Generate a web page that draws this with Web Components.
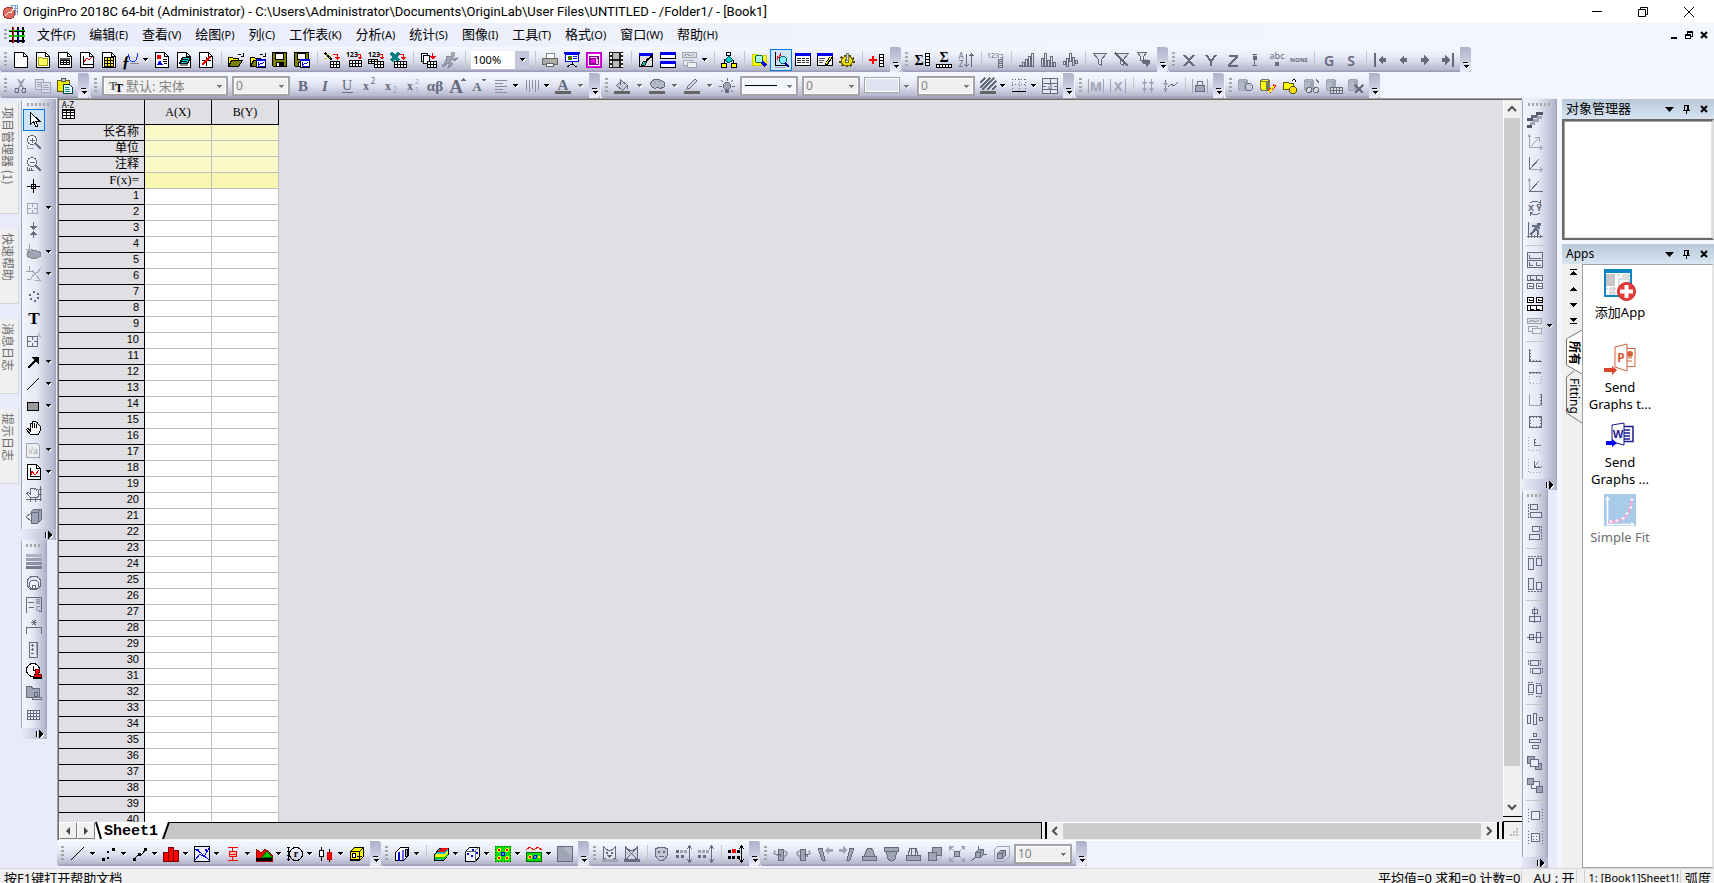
<!DOCTYPE html>
<html lang="zh-CN">
<head>
<meta charset="utf-8">
<title>OriginPro 2018C</title>
<style>
html, body { height: 100%; margin: 0; }
body { overflow: hidden; background: #fff; color: #000; font: 12px/16px "Noto Sans", "Noto Sans CJK SC", sans-serif; }
</style>
</head>
<body>
<origin-app></origin-app>
<script>
/* ---------- icon drawing helpers (16 x 16 grid) ---------- */
const D = '#636b7c', G = '#9fa5b4', K = '#000', RED = '#f00', BLU = '#0000f0', YEL = '#ffff00';
const L = (d, c = D, w = 1) => `<path d="${d}" fill="none" stroke="${c}" stroke-width="${w}"/>`;
const F = (d, c = D, s) => `<path d="${d}" fill="${c}"${s ? ` stroke="${s}"` : ''}/>`;
const R = (x, y, w, h, f = 'none', s) => s
  ? `<rect x="${x + .5}" y="${y + .5}" width="${w - 1}" height="${h - 1}" fill="${f}" stroke="${s}"/>`
  : `<rect x="${x}" y="${y}" width="${w}" height="${h}" fill="${f}"/>`;
const C = (x, y, r, f = 'none', s = D) => `<circle cx="${x}" cy="${y}" r="${r}" fill="${f}" stroke="${s}"/>`;
const T = (x, y, size, t, c = D, extra = '') => `<text x="${x}" y="${y}" font-size="${size}" fill="${c}" text-anchor="middle" ${extra}>${t}</text>`;
const SERIF = 'font-family="Liberation Serif" font-weight="bold"';
const DASH = (d, c = D) => `<path d="${d}" fill="none" stroke="${c}" stroke-dasharray="2 1"/>`;
const DOT = (d, c = D) => `<path d="${d}" fill="none" stroke="${c}" stroke-dasharray="1 2"/>`;
const GRID = (x, y, nx, ny, cw, ch, f = '#fff', s = K) => {
  let p = R(x, y, nx * cw + 1, ny * ch + 1, f);
  for (let i = 0; i <= nx; i++) p += R(x + i * cw, y, 1, ny * ch + 1, s);
  for (let j = 0; j <= ny; j++) p += R(x, y + j * ch, nx * cw + 1, 1, s);
  return p;
};
const PG = F('M1.5 .5h9l4 4v11h-13z', '#fff', K) + L('M10.5 .5v4h4', K);
const REDARR = L('M9 2.5h4.5v3', RED) + F('M11 5h5.5L13.700 8z', RED);
const GRAPH = R(6, 7, 10, 9, '#fff', K) + R(6, 7, 10, 2, BLU) + L('M8.5 10v4.500h6M9 13l2-2 1 1 2-2', BLU);
const FOLD = F('M.5 14.500v-9h4l1 1h5v2', YEL, K) + F('M.5 14.500l3-6h11l-4 6z', '#808000', K) + L('M9.500 3.500q2-3 4 0M15.500 1v3h-3', K);
const FLOP = F('M.5 .5h14v14h-13l-1-1z', '#808000', K) + R(3, 1, 9, 7, '#fff', K) + R(4, 10, 8, 5, K) + R(5, 11, 2, 3, '#fff');
const CYL = (f, s, x = 0) => F(`M${x + .5} 2.500v9q4.500 3 9 0v-9q-4.500-3-9 0z`, f, s) + L(`M${x + .5} 2.500q4.500 3 9 0`, s) + R(x + 6, 4, 3, 8, s);
const BAR = hs => hs.map((h, i) => R(1 + i * 3, 15 - h, 3, h, 'none', D)).join('');
const MINI = (x, y, c) => R(x, y, 7, 6, '#fff', c) + L(`M${x + 2.500} ${y + 1.500}v2h3`, c);

const ICONS = {
  app: L('M8 1.500h7.500v9M10 1.500v2M13 1.500v9M10 4.500h6M12 7.500h4', '#7fa5d6') + C(7, 9, 6, '#e06a5c', '#a63a30') + L('M3 12l4-4 2 1 3-5', '#fff'),
  matrixwin: L('M0 3.500h16M0 8.500h16M0 13.500h16', K, 2) + L('M3.500 0v16M8.500 0v16M13.500 0v16', K, 2) + L('M0 8.500h16', '#0c0', 2) + L('M0 3.500h16', '#0c0') + L('M4.500 0v16', RED) + L('M9.500 0v16', '#00a'),
  azgrid: T(7, 5, 8, 'A-Z', K) + GRID(1, 6, 3, 3, 4, 3, '#fff') + R(1, 6, 13, 2, K),
  'new': PG,
  newfolder: PG + F('M3.500 13.500v-8h3l1 1h5v7z', '#ffff66', '#a0a000'),
  newbook: PG + GRID(3, 6, 3, 3, 3, 2, '#fff') + R(3, 6, 10, 2, '#555'),
  newgraph: PG + L('M4.500 4v8.500h9', K) + L('M5 10l3-4 2 2 3-3', RED),
  newmatrix: PG + GRID(3, 5, 3, 3, 3, 3, '#ffee20'),
  newfunc: T(3, 15, 16, 'ƒ', K, SERIF + ' font-style="italic"') + L('M5.500 2q1 8 4.500 8t5-9', '#1030ff') + L('M7 11.500h9', '#888'),
  newlayout: PG + R(3, 3, 4, 4, RED) + F('M3 13l3-5 3 5z', BLU) + L('M9 7.500h4M9 9.500h4M10 11.500h3', K),
  newnotes: PG + F('M3.500 11.500l3-6h8l-3 6z', '#00e0e0', K) + L('M6 7.500h6M5 9.500h6', K) + R(4, 12, 8, 2, '#888'),
  newfunc2: PG + L('M4 8.500h9M8.500 5v9', K) + L('M4 13l8-8', RED, 2),
  open: FOLD,
  opent: FOLD + GRAPH, save: FLOP, savet: FLOP + GRAPH,
  wand: L('M1 1l7 7', K, 2) + L('M2 4l3-3M5 6l3-3M0 6h3', '#cc0') + REDARR + GRID(6, 9, 3, 2, 3, 3),
  imp1: T(6, 5, 7, '123', K, 'font-weight="bold"') + L('M11 2.500h3v3', RED) + F('M11 5h5l-2 3z', RED) + GRID(3, 8, 4, 2, 3, 3),
  imp2: T(6, 5, 7, '123', K, 'font-weight="bold"') + L('M11 2.500h3v3', RED) + F('M11 5h5l-2 3z', RED) + GRID(0, 7, 3, 2, 3, 2) + GRID(6, 9, 3, 2, 3, 3),
  excel: L('M1 1l8 8M9 1L1 9', '#008080', 3) + REDARR + GRID(4, 9, 4, 2, 3, 3),
  batch: R(1, 1, 7, 9, '#fff', K) + R(3, 3, 7, 9, '#fff', K) + L('M12.500 1v4', RED) + F('M10 4h6l-3 4z', RED) + GRID(7, 9, 3, 2, 3, 3),
  run: C(11, 2.500, 2, G, G) + F('M4 5l5-1 3 3 3-1v1l-3 2-2-2-2 2 3 3-3 3-2 0 2-3-3-1-2 3H0v-2h2l3-5-1-1z', G, '#858c9c'),
  print: R(4, 1, 9, 6, '#fff', '#888') + F('M.5 6.500h15v6h-15z', '#aaa', '#666') + R(4, 11, 8, 4, '#fff', '#666') + R(11, 8, 2, 1, '#cc0'),
  slide: R(0, 0, 16, 2, BLU) + R(1, 2, 14, 8, '#fff', BLU) + C(6, 6, 2, RED, '#090') + L('M9 4.500h4M9 6.500h4', BLU) + L('M8 10v3M3 15l5-3 5 3', K),
  snap: R(0, 0, 16, 16, '#f0f', '#b000b0') + R(2, 2, 12, 12, '#fff') + R(3, 4, 10, 9, '#fcf', '#808') + C(7, 9, 3, '#f0f', '#808') + R(11, 5, 2, 2, '#808'),
  film: R(1, 0, 14, 16, '#222') + R(5, 1, 6, 6, '#bbb') + R(5, 9, 6, 6, '#bbb') + DOTS(2.5, '#fff') + DOTS(13.5, '#fff'),
  editpen: R(1, 1, 14, 14, '#ddd', K) + R(1, 1, 14, 3, BLU) + L('M15 3L8 9', K, 2) + F('M3 14l2-4 4-1-2 4z', '#0cc', K),
  twowin: R(0, 0, 16, 7, '#fff', K) + R(0, 0, 16, 3, BLU) + R(0, 9, 16, 7, '#fff', K) + R(0, 9, 16, 3, BLU),
  tile: R(0, 0, 15, 6, '#ddd', G) + L('M2 4l3-2 3 2 4-2', G) + R(1, 8, 10, 6, '#eee', G) + R(5, 10, 10, 6, '#eee', G),
  org: R(5, 0, 5, 4, '#fff', K) + L('M7.500 4v3M3 11V8l4-2 5 2v3', K) + F('M8 4l4 4-4 3-4-3z', '#0cc', '#066') + R(0, 11, 6, 5, YEL, K) + R(10, 11, 6, 5, YEL, K),
  project: F('M1 2h5l1 1h8v10H1z', YEL, '#cc0') + C(8, 7, 4, '#aff', '#066') + L('M11 10l4 4', BLU, 3),
  view: L('M2.500 0v13.500h12', K) + L('M4 8V4l2 2 2-5', RED) + L('M2 15.500h10', G) + C(10, 8, 3.500, '#8ef', '#066') + L('M12 11l4 4', '#008', 2),
  results: R(0, 1, 16, 13, '#fff', K) + R(0, 1, 16, 3, BLU) + L('M2 6.500h4M7 6.500h3M11 6.500h3M2 8.500h4M7 8.500h3M11 8.500h3M2 10.500h4M7 10.500h3M11 10.500h3', '#333'),
  script: R(0, 1, 16, 13, '#fff', K) + R(0, 1, 16, 3, BLU) + L('M2 6.500h6M2 8.500h5M2 10.500h4', '#555') + L('M14 5l-5 8', K, 3) + L('M14 5l-5 7', YEL),
  gear: `<ellipse cx="8" cy="9" rx="6.500" ry="5" fill="none" stroke="#554400" stroke-width="3" stroke-dasharray="2 2"/>` + `<ellipse cx="8" cy="9" rx="6" ry="4.500" fill="#e6e000" stroke="#776600"/>` + C(8, 9, 2, '#fff', '#660') + R(7, 1, 3, 8, '#ddd', '#777'),
  addcol: L('M0 7.500h8M4 3.500v8', RED, 2) + GRID(10, 2, 1, 4, 4, 3),
  sumrow: T(5, 13, 14, 'Σ', K, SERIF) + GRID(11, 1, 1, 4, 4, 3),
  sumcol: T(8, 10, 14, 'Σ', K, SERIF) + GRID(0, 12, 5, 1, 3, 3),
  sort: T(3, 7, 8, 'A') + T(3, 15, 8, 'Z') + L('M8.500 2v12M6 12l2.500 2 2.500-2M13.500 3v12M11.500 4l2-2 2 2'),
  set123: T(5, 6, 7, '123') + L('M11 2.500h3v3', G) + F('M11 5h5l-2 2z', G) + GRID(10, 7, 1, 4, 4, 2, '#ddd', D),
  bars1: BAR([2, 5, 8, 11, 14]), bars2: BAR([9, 14, 7, 11, 5]),
  bars3: R(1, 9, 3, 4, 'none', D) + R(4, 6, 3, 9, 'none', D) + R(7, 1, 3, 9, 'none', D) + R(10, 5, 3, 9, 'none', D) + R(13, 8, 3, 4, 'none', D),
  filter: F('M1.500 1.500h13l-5 6v6l-3-2v-4z', '#dfe2ec', D),
  nofilter: F('M1.500 1.500h13l-5 6v6l-3-2v-4z', '#dfe2ec', D) + L('M1 1l13 13', D, 2),
  refilter: F('M1.500 .5h9l-3 4v4h-3v-4z', '#dfe2ec', D) + F('M6 9l4-2v1h4v3l-4 5v-4H7z', D),
  X: L('M3 3l10 11M13 3L3 14', D, 2), Y: L('M3 3l5 6 5-6M8 8v6', D, 2), Z: L('M4 4h8v1L4 13v.5h9', D, 2),
  err: L('M7.500 2v12M5 2.500h5M5 13.500h5') + R(6, 4, 4, 4, D),
  abc: T(8, 7, 9, 'abc') + R(6, 10, 4, 4, D),
  none: T(8, 10, 6, 'NONE', D, 'font-weight="bold"'),
  G: T(8, 14, 14, 'G', D, 'font-weight="600"'), S: T(8, 14, 14, 'S', D, 'font-weight="600"'),
  first: R(1, 1, 2, 14, D) + F('M5 8l5-5v3h3v4h-3v3z'), prev: F('M4 8l5-5v3h3v4h-3v3z'),
  next: F('M12 8L7 3v3H4v4h3v3z'), last: R(13, 1, 2, 14, D) + F('M11 8L6 3v3H3v4h3v3z'),

  cut: L('M5 1l5 9M11 1L6 10', G, 2) + C(4, 12.500, 2, 'none', D) + C(11, 12.500, 2, 'none', D),
  copy: R(0, 1, 9, 11, '#dde', G) + L('M2 4.500h4M2 6.500h4M2 8.500h4', G) + R(6, 4, 10, 11, '#dde', G) + L('M8 7.500h5M8 9.500h6M8 11.500h6', G),
  paste: R(0, 2, 13, 12, '#e8e800', '#665500') + R(4, 0, 5, 4, '#ccc', '#555') + F('M6.500 6.500h6l3 3v6h-9z', '#eff', '#044') + L('M8 9.500h4M8 11.500h5M8 13.500h5', '#088'),
  B: T(8, 13, 15, 'B', D, SERIF), I: T(8, 13, 15, 'I', D, SERIF + ' font-style="italic"'), U: T(8, 12, 14, 'U', D, 'font-family="Liberation Serif"') + R(3, 14, 11, 1, D),
  sup: T(5, 12, 12, 'x', D, SERIF) + T(12, 6, 8, '2', D), sub: T(5, 12, 12, 'x', D, SERIF) + T(12, 15, 8, '2', G),
  supsub: T(5, 12, 12, 'x', D, SERIF) + T(12, 6, 7, '2', G) + T(12, 14, 7, '1', G),
  greek: T(8, 13, 15, 'αβ', D, 'font-family="Liberation Serif" font-weight="bold"'),
  bigA: T(7, 15, 19, 'A', D, 'font-family="Liberation Serif" font-weight="bold"') + F('M11 3h6l-3-3z'), smallA: T(6, 13, 13, 'A', D, SERIF) + F('M10 1h5l-2 3z'),
  align: L('M2 2.500h12M2 5.500h8M2 8.500h12M2 11.500h8M2 14.500h12', '#888e9e'), vlines: L('M2.500 2v10M5.500 2v12M8.500 2v9M11.500 2v12M14.500 2v10', '#888e9e'),
  fontcolor: T(8, 12, 15, 'A', D, SERIF) + R(0, 13, 16, 3, '#646464'),
  bucket: F('M2.500 7.500l5-5 6 5-5 5z', '#c4c8d4', D) + L('M6 1v6M13 7v4', D) + R(0, 13, 16, 3, '#646464'),
  palette: F('M2.500 3.500q4-4 10-1t2 7l-4 1q-2-2-4 0l-3-1q-3-3-1-6z', '#b4b9c6', D) + C(6, 5, 1, '#fff', G) + C(10, 4, 1, '#fff', G) + R(0, 13, 16, 3, '#646464'),
  pen: F('M3 11l1-3 7-7 2 2-7 7z', '#d4d7e2', D) + R(0, 13, 16, 3, '#646464'),
  bulb: C(8, 8, 3.500, G, D) + R(6, 11, 4, 4, D) + L('M8 0v3M2 2l2 2M14 2l-2 2M0 8h3M13 8h3M2 14l2-2M14 14l-2-2'),
  tt: T(5, 12, 12, 'T', '#666', SERIF) + T(11, 14, 12, 'T', K, SERIF),
  hatch: L('M0 5l5-5M0 10L10 0M2 12L14 0M7 12l9-9M12 12l4-4', D, 1.5) + R(0, 13, 16, 3, '#646464'),
  border: DOT('M1 1.500h14M1 6.500h14M1.500 1v12M8 1v12M14.500 1v12') + R(1, 13, 14, 1, K),
  merge: R(0, 0, 16, 16, '#e4e6f0', D) + L('M0 5.500h16M0 11.500h16M8 0v5M8 12v4') + T(8, 11, 8, 'a') + L('M1 8.500h3M12 8.500h3'),
  maskM: T(8, 13, 13, 'M', G, 'font-weight="bold"') + L('M.5 1v14M15.500 1v14', G), maskX: T(8, 13, 13, 'X', G, 'font-weight="bold"') + L('M.5 1v14M15.500 1v14', G),
  arr1: L('M4.500 1v14M11.500 1v14', G) + F('M2 4h5L4.500 7zM2 12h5l-2.500-3zM9 4h5l-2.500 3zM9 12h5l-2.500-3z', G), arr2: L('M3.500 2v12M6 9l3-3 3 2 4-4', D) + F('M1 5h5L3.500 8zM1 12h5l-2.500-3z', G),
  lock: L('M.5 1v14M15.500 1v14', G) + L('M5.500 7V4q2.500-2 5 0v3') + R(3, 7, 10, 7, G, D),
  db1: CYL('#b4b9c6', G) + C(11, 9, 3.500, '#c8ccd8', D), db2: CYL(YEL, '#776') + L('M15 7l-6 7', RED, 3) + L('M14 8l-5 6', YEL, 2),
  db3: F('M1 4h5l1 1h4v6H1z', YEL, '#550') + L('M10 3q3-3 4 1', K) + C(11, 12, 3.500, '#fd0', '#550'), db4: CYL('#b4b9c6', G) + C(5, 12, 2.500, '#ddd') + C(12, 12, 2.500, '#ddd') + L('M12 1l3 4'),
  db5: CYL('#b4b9c6', G) + GRID(4, 9, 4, 2, 3, 3, '#ddd', D), db6: CYL('#b4b9c6', G) + L('M7 7l8 8M15 7l-8 8', D, 2),

  pointer: F('M4.500 .5v12l3-3 2.500 5.500 2-1-2.500-5h4z', '#fff', K),
  zoomin: C(6, 6, 4.500, '#f4f6fc', D) + L('M4 6.500h5M6.500 4v5') + L('M9 9l6 6', D, 2) + L('M1.500 11v3.500h6', G),
  zoomout: C(6, 6, 4.500, '#f4f6fc', D) + L('M4 6.500h5') + L('M9 9l6 6', D, 2) + L('M1.500 11v3.500h6M3.500 12v3M5.500 12v3', D),
  cross: L('M7.500 1v14M1 8.500h13', K) + R(5, 6, 5, 5, 'none', K),
  datasel: R(1, 3, 11, 11, 'none', G) + L('M1 8.500h4M8 8.500h4M6.500 3v4M6.500 10v4', G),
  updown: F('M4 4h7L7.500 8zM4 13h7L7.500 9zM7 0h1v4H7zM7 13h1v3H7z'),
  ellipse: `<ellipse cx="8" cy="10.500" rx="7" ry="4" fill="${G}" stroke="#888"/>` + L('M3.500 0v5M0 5.500h7M5 8l-2-2-2 2', G),
  ptpath: L('M1 14l4-1 3-5 4-2 3-4M6 4l8 10M3.500 0v5M0 5.500h7M9 14h6', G),
  dots: R(3, 6, 2, 2, D) + R(7, 3, 2, 2, D) + R(11, 5, 2, 2, D) + R(11, 9, 2, 2, D) + R(4, 10, 2, 2, D) + R(8, 12, 2, 2, D),
  text: T(8, 14, 17, 'T', K, SERIF), datatext: R(1, 4, 11, 11, 'none', D) + L('M1 9.500h4M8 9.500h4M6.500 4v4M6.500 11v4') + T(13, 6, 7, 'A', G),
  arrow: L('M2 14L11 5', K, 2) + F('M5 3h8v8z', K), line: L('M1 14L13 2', K), rect: R(1, 4, 12, 9, '#999', K),
  hand: F('M4.500 14.500l-4-5 1.500-1 2 2V3.500q1-1 2 0V2q1-2 2 0q1-1 2 0v1q2-1 2 1v1q1-1 2 1v5l-1.500 3.500z', '#fff', K) + L('M6.500 3v5M8.500 3v5M10.500 4v4', K),
  eq: F('M.5 1.500h11l2 2v12h-13z', '#eee', G) + T(7, 12, 9, '√a', G), gobj: PG + L('M4.500 4v8.500h9', K) + L('M5 11l1-4 2 3h2l3-4', RED),
  handaxis: F('M4.500 11.500l-4-4 2-1 2 2V3q2-1 2 0q1-2 2 0q2-1 2 1q1-1 2 1v5l-2 2z', '#eef', D) + L('M14.500 0v15M0 13.500h16M4.500 12v4M9.500 12v4M13 3.500h3M13 8.500h3'),
  box3d: F('M5 4l3-3h7v11l-3 3H5z', G, D) + L('M5 4h7v11M12 4l3-3M5 5L0 9l5 4'),

  lines4: R(0, 1, 16, 3, '#aeb3c4') + R(0, 5, 16, 3, '#9da2b5') + R(0, 9, 16, 3, '#8a90a2') + R(0, 13, 16, 3, '#747b8e'),
  rings: C(8, 8, 7, '#dfe3f2', D) + C(8, 9.500, 4.500, '#eef', D) + C(8, 12, 2, '#fff', D),
  legend: L('M.5 16V.5h15v14h-3M2 5.500h6M3 10.500h5') + T(12, 7, 7, 'B') + T(12, 14, 7, 'C'), bracket: L('M.5 15V8.500h15V15M5 3.500h6M8 1v5M6 1l4 5M10 1L6 6'),
  ruler: R(3, 1, 9, 16, '#e4e6f2', D) + L('M5 4.500h3M5 8.500h3M5 12.500h3M6.500 3v3M6.500 7v3') + L('M10.500 2v12', G),
  clock: C(7, 7, 6.500, '#fff', K) + L('M7 3v4h3', K) + F('M9 6h4v3l-1 2h3v3H8v-3h2L9 9z', RED, '#800') + R(7, 14, 9, 2, '#fff', K),
  fstamp: F('M.5 12.500v-11h5l1 2h7v9z', G, D) + R(8, 7, 4, 5, G, D) + R(6, 12, 10, 3, '#dde', D), grid: GRID(1, 3, 4, 3, 3, 3, '#eef', D),

  stairs: R(9, 0, 7, 3, '#4e5668') + R(4, 3, 7, 3, D) + R(10, 4, 5, 3, G) + R(0, 6, 6, 3, '#4e5668') + R(6, 7, 6, 3, G) + R(3, 10, 5, 3, G) + R(0, 13, 5, 3, '#4e5668'),
  ax1: L('M2.500 1v12.500h13M1 3l1.500-2L4 3M13 11l2 2.500-2 2', G) + L('M4 12l8-8M8 3.500h4v4', G), ax2: L('M2.500 1v12.500', D) + L('M2 13.500h13M13 11l2 2.500-2 2', G) + L('M3 13l9-10'),
  ax3: L('M2.500 1v12M1 3l1.500-2L4 3', G) + L('M2 13.500h14') + L('M3 13l9-10'), xy: T(4, 11, 9, 'X', D, 'font-weight="bold"') + T(12, 11, 9, 'Y', D, 'font-weight="bold"') + L('M3 3q5-4 10 0M13 0v4h-3M13 13q-5 4-10 0M3 16v-4h3'),
  runner: R(1, 1, 15, 12, '#dce3f6') + L('M1.500 0v15.500M0 14.500h16M4 13v3M7 13v3M10 13v3M13 13v3') + C(12, 2.500, 1.500, D, D) + L('M5 4h5l-4 6-3 3M8 7l3 2v4M10 5l3 1', D, 2),
  lay1: R(0, 0, 16, 16, '#e4e6f4', D) + L('M2.500 3v3h11M0 8.500h16M2.500 10v3h3M9.500 10v3h4'), lay2: R(0, 1, 16, 6, '#e4e6f4', D) + L('M3.500 2v3h3M9.500 2v3h3') + MINI(0, 9, D) + MINI(9, 9, D),
  lay3: MINI(0, 1, K) + MINI(9, 1, K) + R(0, 9, 16, 6, '#fff', K) + L('M3.500 10v3h3M9.500 10v3h3', K),
  a1: L('M2.500 1v12.500h12') + DOT('M3.500 2v12M3 12.500h12'), a2: L('M2 2.500h12') + DOT('M2.500 3v11M14.500 3v11M3 13.500h12', G) + DOT('M3 3.500h12'),
  a3: L('M14.500 2v12') + L('M2.500 2v11.500h12', G) + DOT('M13.500 2v12'), a4: R(2, 2, 13, 12, 'none', D) + DOT('M3 3.500h11M3 12.500h11M3.500 3v10M13.500 3v10'),
  a5: DOT('M1.500 1v13.500h12', G) + L('M7.500 3v6.500h6') + DOT('M8.500 3v6'), a6: DOT('M1.500 1v13.500h12', G) + L('M7.500 3v6.500h6') + L('M8 8l4-5', G) + DOT('M8 8.500h7'),
  al1: DASH('M1.500 1v15') + R(3, 1, 8, 6, '#e2e5f6', D) + R(3, 9, 12, 6, '#e2e5f6', D), al2: DASH('M14.500 1v15') + R(5, 1, 8, 6, '#e2e5f6', D) + R(2, 9, 11, 6, '#e2e5f6', D),
  al3: DASH('M1 1.500h14') + R(1, 3, 6, 12, '#e2e5f6', D) + R(9, 3, 6, 8, '#e2e5f6', D), al4: DASH('M1 14.500h14') + R(1, 1, 6, 12, '#e2e5f6', D) + R(9, 5, 6, 8, '#e2e5f6', D),
  al5: R(5, 2, 6, 5, '#e2e5f6', D) + R(2, 9, 12, 6, '#e2e5f6', D) + L('M7.500 0v16'), al6: R(2, 5, 5, 6, '#e2e5f6', D) + R(9, 3, 5, 11, '#e2e5f6', D) + L('M0 8.500h16'),
  ds1: R(3, 1, 9, 6, '#e2e5f6', D) + R(5, 9, 9, 6, '#e2e5f6', D) + DASH('M1.500 1v6M13.500 1v6M3.500 9v6M15.500 9v6'), ds2: R(1, 3, 6, 9, '#e2e5f6', D) + R(9, 4, 6, 9, '#e2e5f6', D) + DASH('M1 1.500h6M1 13.500h6M9 2.500h6M9 15.500h6'),
  eq1: R(0, 4, 4, 9, '#e2e5f6', D) + R(6, 2, 4, 12, '#e2e5f6', D) + R(12, 6, 4, 4, '#e2e5f6', D), eq2: R(6, 0, 4, 4, '#e2e5f6', D) + R(2, 6, 12, 4, '#e2e5f6', D) + R(5, 12, 7, 4, '#e2e5f6', D),
  front: R(0, 1, 8, 8, G, D) + R(8, 8, 7, 7, G, D) + R(3, 4, 9, 8, '#e8ebfa', D), back: R(4, 4, 9, 8, '#e8ebfa', D) + R(0, 1, 7, 7, G, D) + R(9, 9, 7, 7, G, D),
  sz1: R(4, 4, 9, 9, '#e8ebfa', D) + DOT('M1.500 2v14M15.500 2v14'), sz2: R(4, 4, 9, 9, '#e8ebfa', D) + DOT('M1.500 2v14M15.500 2v14M6 7.500h5M6 10.500h5'),

  pline: L('M1 14L14 1', K), pscatter: R(1, 12, 3, 3, K) + R(6, 5, 2, 2, K) + R(11, 2, 3, 3, K) + R(6, 11, 2, 2, K), plinesym: L('M2 13l5-5h3l4-5', K) + R(1, 12, 3, 3, K) + R(6, 7, 3, 3, K) + R(12, 2, 3, 3, K),
  pbar: R(0, 6, 6, 10, RED, '#700') + R(5, 1, 6, 15, RED, '#700') + R(10, 4, 6, 12, RED, '#700'), pmulti: R(0, 0, 16, 16, '#eef', K) + L('M1 14l5-6 4 3 5-9M1 3l6 4 8 7', BLU) + R(3, 3, 2, 2, BLU) + R(11, 3, 2, 2, BLU),
  pbox: L('M3 1.500h10M7.500 1v4M3 14.500h10M7.500 11v4', RED) + R(4, 5, 8, 6, '#fbb', RED) + L('M4 8.500h8', RED), parea: F('M0 3l5 4 4-4 7 6v6H0z', RED, '#900') + F('M6 11l5-6 5 6z', '#0c0', '#060') + R(0, 12, 16, 3, K),
  ppolar: C(9, 8, 6.500, 'none', K) + T(9, 11, 10, 'r', K, SERIF) + L('M1.500 1v14M0 1.500h3M0 5.500h2M0 9.500h2M0 13.500h3', K), pstock: L('M3.500 1v14M11.500 3v13', K) + R(1, 4, 5, 7, '#fff', K) + R(9, 6, 5, 8, RED, '#c00'),
  pcube: F('M1.500 5.500l4-4h9v9l-4 4h-9z', YEL, K) + R(1, 5, 10, 9, '#fe0', K) + R(3, 7, 4, 5, '#fff', K) + L('M8 10h5M11 5l4-4', K),
  p3bar: F('M1.500 6.500l5-5h8v8l-5 5h-8z', '#fff', K) + R(4, 6, 2, 9, BLU) + R(8, 4, 2, 10, '#66f') + R(11, 3, 3, 8, G, K),
  p3surf: F('M1.500 8.500l5-6h9v6l-5 6h-9z', '#2bc', K) + F('M4 6l4-4h7l-4 4z', RED) + F('M3 8h8l4-4v3l-4 4H2z', YEL) + F('M2 11h9l4-4v2l-4 4H2z', '#0c0'),
  p3scat: F('M1.500 5.500l4-4h10v9l-4 5h-10z', '#f4f4ff', K) + L('M1 5.500h10v10M11 5l4-4') + R(3, 7, 2, 2, BLU) + R(7, 9, 2, 2, BLU) + R(12, 6, 2, 2, BLU) + R(8, 3, 2, 2, BLU),
  pcont: R(0, 0, 16, 16, '#0d0') + C(4, 4, 1.500, RED, YEL) + C(12, 4, 1.500, RED, YEL) + C(8, 8, 2, '#3af', BLU) + C(4, 12, 1.500, RED, YEL) + C(12, 12, 1.500, RED, YEL) + DOT('M0 .5h16M0 15.500h16M.5 0v16M15.500 0v16', '#050'),
  pcont2: L('M0 4l4-3 4 3 4-3 4 3', RED) + R(0, 6, 16, 10, '#0d0', '#060') + C(4, 11, 1.500, RED, YEL) + C(9, 11, 1.500, '#3af', BLU) + C(13, 11, 1, RED, YEL), pimg: R(0, 0, 16, 16, G, D) + F('M5 1l10 10V1z', '#b2b7c4'),
  mask1: F('M1.500 12V1l4 3h4l4-3v11q-6 4-12 0z', '#e2e4ee', D) + R(4, 6, 2, 2, D) + R(9, 6, 2, 2, D) + F('M5 9h5l-2.500 3z') + R(0, 13, 16, 3, G), mask2: F('M1.500 12V1l4 3h4l4-3v11q-6 4-12 0z', '#d2d5e0', D) + L('M1 1l13 13M14 1L1 14') + R(0, 13, 16, 3, D),
  mask3: F('M1.500 2.500q6-2 12 0v7q-3 5-6 5.500-4-1-6-5.500z', '#c2c6d2', D) + R(4, 5, 2, 2, D) + R(9, 5, 2, 2, D) + L('M5 10.500h5'),
  m1: R(0, 4, 3, 3, D) + R(4, 4, 3, 3, G) + R(8, 4, 3, 3, G) + R(0, 9, 3, 3, D) + R(5, 9, 3, 3, D) + L('M13.500 1v14M11 3l2.500-3L16 3M11 13l2.500 3 2.500-3'),
  m2: R(0, 4, 3, 3, G) + R(4, 4, 3, 3, G) + R(8, 4, 3, 3, G) + R(0, 9, 3, 3, D) + R(5, 9, 3, 3, D) + L('M13.500 1v14M11 3l2.500-3L16 3M11 13l2.500 3 2.500-3'),
  m3: R(0, 4, 3, 3, K) + R(4, 3, 4, 4, RED) + R(9, 4, 3, 3, K) + R(0, 10, 3, 3, K) + R(4, 10, 3, 3, K) + R(9, 10, 3, 3, K) + L('M13.500 1v14M11 3l2.500-3L16 3M11 13l2.500 3 2.500-3', K),
  r1: R(5, 3, 6, 12, G, D) + L('M5 9q-6-1-3-4M11 5q6 2 0 6', G, 2) + L('M4 8h3v3', D), r2: R(5, 3, 6, 12, G, D) + L('M5 5q-6 2 0 6M11 9q6-1 3-4', G, 2) + L('M9 8h3v3', D),
  r3: F('M1 2h4l3 12H5z', G, D) + F('M8 4l4-4v3h4v3h-4v3z', G), r4: F('M15 2h-4L8 14h3z', G, D) + F('M8 4L4 0v3H0v3h4v3z', G),
  r5: F('M5 5l2-3h3l2 3 2 6H3z', G, D) + R(1, 10, 15, 5, G, D), r6: F('M3 5h11l-2 8-3 2H8l-3-2z', G, D) + R(1, 1, 15, 5, G, D),
  r7: F('M5 2h6l2 7H3z', '#dde', D) + L('M6 2v7M10 2v7') + R(1, 9, 15, 6, G, D), r8: R(5, 1, 10, 9, G, D) + R(1, 6, 9, 9, G, D) + L('M10 15l5-5', G),
  r9: R(5, 5, 6, 6, G, D) + F('M0 0h5L0 5zM16 0h-5l5 5zM0 16h5l-5-5zM16 16h-5l5-5z', G) + L('M2 2l3 3M14 2l-3 3M2 14l3-3M14 14l-3-3', G), r10: F('M4.500 6.500l3-3h5v5l-3 3h-5z', G, D) + L('M4 6.500h5v5M9 6l3-3M7 0v3M13 8h3M4 12l-4 3'), r11: F('M4.500 7.500l3-3h5v5l-3 3h-5z', G, D) + L('M4 7.500h5v5M9 7l3-3') + L('M1 4l4-4h11v11l-4 4H1z', G),
};
function DOTS(x, c) { return `<path d="M${x} 1v15" stroke="${c}" stroke-width="2" stroke-dasharray="2 2"/>`; }
const svg = (name, size = 16) => `<svg class="i" width="${size}" height="${size}" viewBox="0 0 16 16" shape-rendering="crispEdges" aria-hidden="true">${ICONS[name] || ''}</svg>`;
const DOWN = (c = '#000') => `<svg class="d" width="7" height="6" viewBox="0 0 7 6" shape-rendering="crispEdges" aria-hidden="true"><path d="M2 2h5v1h-1v1h-1v1h-1v-1z" fill="#fff"/><path d="M1 1h5v1h-1v1h-1v1h-1v-1h-1v-1h-1z" fill="${c}"/></svg>`;

class Base extends HTMLElement {
  connectedCallback() {
    if (this.shadowRoot) return;
    const root = this.attachShadow({ mode: 'open' });
    const t = document.createElement('template');
    t.innerHTML = `<style>*{box-sizing:border-box}button{font:inherit;color:inherit;border:0;background:none;padding:0;margin:0}svg{display:block;overflow:visible;font-family:"Noto Sans",sans-serif}${this.css()}</style>${this.html()}`;
    root.append(t.content.cloneNode(true));
  }
  at(n, d = '') { return this.getAttribute(n) ?? d; }
  css() { return ':host{display:block}'; }
  html() { return '<slot></slot>'; }
}
const def = (n, css, html) => customElements.define(n, class extends Base {
  css() { return typeof css === 'function' ? css.call(this) : css; }
  html() { return typeof html === 'function' ? html.call(this) : html; }
});

/* ---------- toolbar parts ---------- */
def('tool-button', `
  :host{display:block;flex:none}
  button{display:flex;align-items:center;height:22px}
  .b{width:22px;height:22px;display:grid;place-items:center}
  .a{width:9px;display:flex}
  :host([wide]) .a{width:13px;padding-left:3px}
  :host([pressed]) .b{background:#cfe4f7;border:1px solid #0078d7}`,
  function () {
    const drop = this.hasAttribute('drop') || this.hasAttribute('wide');
    return `<button type="button" aria-label="${this.at('icon')}"><span class="b">${svg(this.at('icon'))}</span>${drop ? `<span class="a">${DOWN(this.hasAttribute('wide') ? '#6a6a6a' : '#000')}</span>` : ''}</button>`;
  });

def('tool-sep', `
  :host{display:flex;flex:none;width:8px;height:22px;justify-content:center}
  i{width:1px;height:18px;margin-top:2px;background:#c5c5c5}
  :host([row]){width:22px;height:8px;align-items:center}
  :host([row]) i{width:18px;height:1px;margin:0;background:#c5c5c5}`, '<i></i>');

def('tool-combo', function () {
  return `
  :host{display:block;flex:none;position:relative;width:${this.at('size', '58')}px;height:20px;margin:0 2px}
  select{appearance:none;width:100%;height:100%;margin:0;border:2px solid #a3a3a8;outline:1px solid #fff;outline-offset:-3px;border-radius:0;background:#f0f0f0;color:#838383;font:12px/14px "Noto Sans","Noto Sans CJK SC",sans-serif;padding:0 0 0 2px;opacity:1}
  .d{position:absolute;right:5px;top:8px}
  .tt{position:absolute;left:6px;top:2px}
  :host([icon]) select{padding-left:22px;font-size:13px}
  :host([active]){height:18px}
  :host([active]) select{border:0;outline:0;background:#fff;color:#000;font-size:11px}
  :host([active]) .d{right:0;top:0;width:14px;height:18px;background:#c5c6db;padding:6px 3px}
  .ln{position:absolute;left:5px;top:9px;width:32px;height:1px;background:#000}
  :host([line]) select{background:#f4f6fd}
  :host([swatch]) select{width:36px;height:16px;margin-top:1px;border-width:1px;outline-offset:-2px;background:#e0e2f0}
  :host([swatch]) .d{right:3px}`;
}, function () {
  return `<select aria-label="${this.at('label')}"><option>${this.textContent}</option></select>
  ${this.hasAttribute('icon') ? `<span class="tt">${svg('tt')}</span>` : ''}${this.hasAttribute('line') ? '<span class="ln"></span>' : ''}${DOWN(this.hasAttribute('active') ? '#000' : '#777')}`;
});

def('tool-bar', `
  :host{display:flex;flex:none;height:25px;align-items:center;border-radius:2px 0 0 3px;background:linear-gradient(#f5f8ff,#eceff9 30%,#dcdded 55%,#b6b6cc 92%,#9d9db8 96%)}
  .g{flex:none;width:10px;height:16px;display:grid;place-items:center}
  .g i{width:3px;height:15px;background:repeating-linear-gradient(#a6a6a6 0 2px,transparent 2px 4px)}
  .o{flex:none;width:11px;height:25px;margin-left:2px;background:linear-gradient(#afb0ca,#c9cadf 50%,#ecedfb);border-radius:0 3px 3px 0;display:flex;align-items:flex-end;justify-content:center}
  .o svg{margin-bottom:3px}
  slot{display:flex;align-items:center}
  :host([vertical]){width:26px;height:auto;flex-direction:column;align-items:flex-start;border-radius:3px 0 0 3px;background:linear-gradient(90deg,#a3a4bd 1px,#f3f5fd 1px,#e6e8f4 45%,#b4b5cb 94%,#9d9db8)}
  :host([vertical][broad]){width:35px}
  :host([vertical]) slot{flex-direction:column;align-items:flex-start;padding-left:2px}
  :host([vertical]) .g{width:24px;height:10px}
  :host([vertical]) .g i{height:3px;width:15px;background:repeating-linear-gradient(90deg,#a6a6a6 0 2px,transparent 2px 4px)}
  :host([vertical][broad]) .g{width:34px} :host([vertical][broad]) .g i{width:23px}
  :host([vertical]) .o{width:100%;height:11px;margin:2px 0 0;background:linear-gradient(90deg,#e9eafa,#b4b5cb);border-radius:0 0 3px 3px;align-items:center;justify-content:flex-end}
  :host([vertical]) .o svg{margin:0 4px 0 0}
  :host([fill]){flex:1} :host([fill]) .o{margin-top:auto}`,
  function () {
    const v = this.hasAttribute('vertical');
    return `<span class="g"><i></i></span><slot></slot><button type="button" class="o" aria-label="工具栏选项">${v
      ? `<svg width="8" height="8" viewBox="0 0 8 8" shape-rendering="crispEdges"><path d="M2 1h1v6h-1zM5 1l4 4-3 3z" fill="#fff"/><path d="M1 1h1v6h-1zM4 0l4 4-4 4z"/></svg>`
      : `<svg width="7" height="8" viewBox="0 0 7 8" shape-rendering="crispEdges"><path d="M2 2h5v1h-5zM3 5h5l-2 3z" fill="#fff"/><path d="M1 1h5v1h-5zM1 4h6l-3 3z"/></svg>`}</button>`;
  });

/* ---------- title and menu ---------- */
def('title-bar', `
  :host{display:flex;height:23px;align-items:center;background:#fff;padding-left:2px}
  h1{flex:1;margin:0 0 0 5px;font:400 13px/20px Roboto,"Noto Sans",sans-serif;white-space:nowrap}
  .w{width:46px;height:23px;display:grid;place-items:center}
  .w:last-child{margin-right:2px}`,
  `${svg('app')}<h1><slot></slot></h1>
  <button class="w" aria-label="最小化"><svg width="10" height="10"><path d="M0 4.500h10" stroke="#000"/></svg></button>
  <button class="w" aria-label="还原"><svg width="10" height="10"><path d="M.5 2.500h7v7h-7zM2.500 2.500v-2h7v7h-2" fill="none" stroke="#000"/></svg></button>
  <button class="w" aria-label="关闭"><svg width="10" height="10"><path d="M0 0l10 10M10 0L0 10" stroke="#000"/></svg></button>`);

def('menu-item', `:host{display:block}
  button{height:22px;padding:0 14px 2px 0;font-size:13px;line-height:20px;white-space:nowrap}
  small{font-size:11px}`, function () { return `<button type="button"><slot></slot><small>(${this.at('key')})</small></button>`; });

def('menu-bar', `
  :host{display:flex;height:24px;align-items:center;background:linear-gradient(90deg,#e9ebfb,#f2f5fd 60%,#f3f6fe)}
  .g{width:3px;height:12px;margin:0 2px 0 4px;background:repeating-linear-gradient(#a6a6a6 0 2px,transparent 2px 4px)}
  nav{display:flex;flex:1;margin-left:12px}
  .w{width:15px;height:16px;display:grid;place-items:center}
  .e{display:flex;padding-right:3px;margin-bottom:1px}`,
  `<span class="g"></span>${svg('matrixwin')}<nav><slot></slot></nav><span class="e">
  <button class="w" aria-label="最小化窗口"><svg width="8" height="8"><path d="M1 7h6" stroke="#000" stroke-width="2"/></svg></button>
  <button class="w" aria-label="还原窗口"><svg width="8" height="8" shape-rendering="crispEdges"><path d="M.5 3.500h5v4h-5zM0 4h6M2.500 3.500v-3h5v5h-2M2 1h6" fill="none" stroke="#000"/></svg></button>
  <button class="w" aria-label="关闭窗口"><svg width="8" height="8"><path d="M1 1l6 6M7 1L1 7" stroke="#000" stroke-width="2"/></svg></button></span>`);

/* ---------- left tabs ---------- */
def('side-tab', function () {
  return `:host{display:block;width:19px;height:${this.at('size')}px;margin-bottom:15px}
  button{width:100%;height:100%;display:flex;align-items:center;background:#f0f0f0;border-right:1px solid #d5d5d5;border-bottom:1px solid #d5d5d5;writing-mode:vertical-rl;text-orientation:sideways;font:12px/16px "Noto Sans CJK SC",sans-serif;color:#6d6d6d;padding:4px 2px 0 0;white-space:pre}`;
}, '<button type="button"><slot></slot></button>');

/* ---------- worksheet ---------- */
def('work-sheet', `
  :host{display:block;flex:1;min-width:0;overflow:hidden;background:#e0dfe3}
  table{border-collapse:separate;border-spacing:0;table-layout:fixed;width:220px}
  th{background:#e0dfe3;border-right:1px solid #000;border-bottom:1px solid #000;font:12px/14px "Liberation Serif","Noto Sans CJK SC",serif;padding:0}
  thead th{height:25px}
  thead th:first-child{width:86px;vertical-align:top;padding:3px 2px}
  tbody th{height:16px;text-align:right;padding:0 5px 0 0;overflow:hidden}
  tbody th div{height:15px;overflow:hidden}
  tbody th.n{font:11px/13px "Liberation Sans",sans-serif}
  td{height:16px;padding:0;background:#fff;border-right:1px solid #c0c0c0;border-bottom:1px solid #c0c0c0}
  .m td{background:#fafac8} .f td{background:#f8f6b0}
  .f th.c{font-size:13px;line-height:13px}`,
  () => {
    const row = (l, c, n) => `<tr class="${c}"><th scope="row" class="${n}"><div>${l}</div></th><td></td><td></td></tr>`;
    let h = `<table><thead><tr><th aria-label="全选">${svg('azgrid')}</th><th scope="col">A(X)</th><th scope="col">B(Y)</th></tr></thead><tbody>`;
    ['长名称', '单位', '注释'].forEach(l => h += row(l, 'm', 'c'));
    h += row('F(x)=', 'f', 'c');
    for (let i = 1; i <= 40; i++) h += row(i, '', 'n');
    return h + '</tbody></table>';
  });

const CH = d => `<svg width="10" height="10" viewBox="0 0 10 10"><path d="${d}" fill="none" stroke="#505050" stroke-width="2"/></svg>`;
def('scroll-bar', `
  :host{display:flex;flex-direction:column;flex:none;width:17px;background:#f0f0f0;border-left:1px solid #fff}
  button{flex:none;width:16px;height:18px;display:grid;place-items:center}
  i{flex:1;background:#cdcdcd}
  b{flex:0 0 32px}
  :host([row]){flex-direction:row;width:auto;flex:1;height:17px;border:0;border-top:1px solid #fff}
  :host([row]) button{height:16px}`,
  function () {
    const r = this.hasAttribute('row');
    return `<button aria-label="向前滚动">${CH(r ? 'M7 1L3 5l4 4' : 'M1 7l4-4 4 4')}</button><i></i>${r ? '' : '<b></b>'}<button aria-label="向后滚动">${CH(r ? 'M3 1l4 4-4 4' : 'M1 3l4 4 4-4')}</button>`;
  });

def('sheet-tabs', `
  :host{display:flex;height:17px;background:#c6c6c6}
  .n{flex:none;width:18px;height:17px;background:#f0f0f0;border:1px solid #808080;border-top-color:#fff;border-left-color:#fff;display:grid;place-items:center}
  .t{flex:none;display:flex;background:#fff;font:bold 15px/17px "Liberation Mono",monospace;color:#000}
  .t span{padding-top:1px;height:17px}
  .r{flex:1;border-top:1px solid #000;border-right:1px solid #000}`,
  `<button class="n" aria-label="上一个"><svg width="6" height="8"><path d="M5 0v8L1 4z" fill="#444"/></svg></button>
  <button class="n" aria-label="下一个"><svg width="6" height="8"><path d="M1 0v8l4-4z" fill="#444"/></svg></button>
  <button class="t"><svg width="9" height="17"><path d="M1 0l5 17" stroke="#000" stroke-width="2"/></svg><span><slot></slot></span><svg width="12" height="17"><path d="M12 0v17H5L11 0z" fill="#c6c6c6"/><path d="M11 0L5 17" stroke="#000" stroke-width="2"/></svg></button><span class="r"></span>`);

def('book-window', `
  :host{display:flex;flex:1;min-height:0;flex-direction:column;border-top:1px solid #a0a0a0;border-bottom:1px solid #fff;border-left:1px solid #a0a0a0;background:#f0f0f0}
  .a{display:flex;flex:1;min-height:0;border-top:1px solid #696969;border-left:1px solid #696969}
  .v{display:flex;flex-direction:column;flex:none;width:19px;background:#f0f0f0}
  .v scroll-bar{flex:1}
  .v b{height:6px;border-top:1px solid #000;border-bottom:1px solid #000}
  .z{display:flex;height:18px;padding-bottom:1px;background:#f0f0f0;border-left:1px solid #696969}
  .z sheet-tabs{flex:986}
  .s{display:flex;flex:452;margin-left:3px;border-left:2px solid #000;border-right:2px solid #000}
  .q{width:20px;margin-left:3px;border-left:2px solid #000;background:#f0f0f0;display:flex;justify-content:flex-end;align-items:flex-end;padding:2px 3px}`,
  `<div class="a"><work-sheet></work-sheet><div class="v"><scroll-bar></scroll-bar><b></b></div></div>
   <div class="z"><sheet-tabs>Sheet1</sheet-tabs><div class="s"><scroll-bar row></scroll-bar></div>
   <div class="q"><svg width="9" height="9" fill="#bbb"><path d="M6 0h2v2h-2zM3 3h2v2h-2zM6 3h2v2h-2zM0 6h2v2h-2zM3 6h2v2h-2zM6 6h2v2h-2z"/></svg></div></div>`);

/* ---------- right panels ---------- */
def('dock-panel', `
  :host{display:flex;flex-direction:column;background:#f0f0f0}
  header{display:flex;flex:none;height:20px;align-items:center;padding-left:4px;background:linear-gradient(#b9c9d8,#d8e4f2)}
  h2{flex:1;margin:0;font-size:13px;line-height:16px;padding-bottom:2px;font-weight:400}
  :host([small]) h2{font-size:12px;padding-bottom:0}
  button{width:17px;height:18px;display:grid;place-items:center}
  header button:last-child{margin-right:2px}`,
  function () {
    return `<header><h2>${this.at('label')}</h2>
    <button aria-label="菜单"><svg width="9" height="5"><path d="M0 0h9L4.500 5z"/></svg></button>
    <button aria-label="固定"><svg width="7" height="9" shape-rendering="crispEdges"><path d="M1.500 5V.5h4V5M4.500 0v5M0 5.500h7M3.500 6v3" fill="none" stroke="#000"/></svg></button>
    <button aria-label="关闭"><svg width="8" height="8"><path d="M1 1l6 6M7 1L1 7" stroke="#000" stroke-width="2"/></svg></button></header><slot></slot>`;
  });

const APPS = {
  add: `<rect x="1" y="1" width="26" height="26" fill="#fff" stroke="#0b83c5" stroke-width="2"/><path d="M0 0h28v4H0z" fill="#0b83c5"/><path d="M2 5h9v12H2z" fill="#c8c8c8"/><path d="M19 6h6v2h-6zM15 10h10v9H15zM6 19h5v2h-5zM6 23h5v2h-5zM13 6h3M2 20h2" fill="none" stroke="#bbb"/><circle cx="22.500" cy="22.500" r="9" fill="#e33b3b" stroke="#c22"/><path d="M22.500 16v13M16 22.500h13" stroke="#fff" stroke-width="4"/>`,
  ppt: `<path d="M22 4.500h9v18h-9M22 14h6M22 17h6" fill="none" stroke="#d2603c"/><circle cx="26" cy="10" r="3" fill="#d2603c"/><path d="M11 3l12-3v27l-12-4z" fill="#fff" stroke="#d2603c"/><text x="17" y="18" font-size="12" font-weight="bold" text-anchor="middle" fill="#d2603c">P</text><path d="M0 24h8v-2l5 4-5 5v-3H0z" fill="#d8472b"/>`,
  word: `<g transform="translate(0 4)"><path d="M19 3.500h10v15H19M19 7h7M19 10h7M19 13h7M19 16h7" fill="none" stroke="#1a1a8c" stroke-width="1.500"/><path d="M8 2l12-2v22l-12-3z" fill="#fff" stroke="#1a1a8c"/><text x="14" y="15" font-size="11" font-weight="bold" text-anchor="middle" fill="#1a1a8c">W</text><path d="M2 18h6v-2l5 4-5 4v-2H2z" fill="#00f"/></g>`,
  fit: `<path d="M0 0h32v32H0z" fill="#a9cbea"/><path d="M3.500 31V4M3 30.500h26" stroke="#fff" stroke-width="1.500"/><path d="M1 6l2.500-4L6 6zM27 28l4 2.500-4 2z" fill="#fff"/><path d="M4 28q12 0 18-6 5-6 6-18" fill="none" stroke="#f5a3cf" stroke-width="2"/><path d="M7 26v3M5.500 27.500h3M13 25v3M11.500 26.500h3M19 23v3M17.500 24.500h3M23 18v3M21.500 19.500h3M27 12v3M25.500 13.500h3M28 4v3M26.500 5.500h3" stroke="#fff"/>` };
def('app-item', function () {
  return `:host{display:block;width:72px;height:75px;flex:none}
  button{width:100%;display:flex;flex-direction:column;align-items:center;font:13px/17px "Noto Sans","Noto Sans CJK SC",sans-serif;text-align:center;white-space:pre;color:${this.at('icon') === 'fit' ? '#6d6d6d' : '#000'}}
  svg{width:32px;height:34px;margin-bottom:1px}
  `;
}, function () { return `<button type="button"><svg>${APPS[this.at('icon')]}</svg><slot></slot></button>`; });

def('app-list', `
  :host{display:flex;flex:1;min-height:0}
  .s{width:20px;flex:none;display:flex;flex-direction:column;align-items:flex-end;padding-top:1px}
  .s button{width:18px;height:16px;display:grid;place-items:center}
  .s .t{width:16px;height:auto;writing-mode:vertical-rl;position:relative;display:block;font:12px/16px "Noto Sans","Noto Sans CJK SC",sans-serif;text-orientation:sideways;margin:12px 0 13px}
  .s .f{margin:0}
  .s .t svg{position:absolute;left:0;top:-11px;z-index:0}
  .s .f svg{top:-9px}
  .s .t span{position:relative}
  .c{flex:1;background:#fff;border:1px solid #a0a0a0;border-right:2px solid #e3e3e3;padding:4px 0 0 1px}`,
  () => {
    const a = d => `<button aria-label="滚动"><svg width="7" height="8" shape-rendering="crispEdges"><path d="${d}"/></svg></button>`;
    return `<div class="s">${a('M0 0h7v1H0zM3 2h1l3 4H0z')}${a('M3 2h1l3 4H0z')}${a('M0 2h7L4 6H3z')}${a('M0 6h7v1H0zM0 1h7L4 5H3z')}
    <button class="t"><svg width="16" height="46" fill="#fff" stroke="#777"><path d="M16 0L.5 9v26L16 44"/></svg><span><b>所有</b></span></button>
    <button class="t f"><svg width="16" height="56" fill="none" stroke="#777"><path d="M8 2L.5 8v36L16 54"/></svg><span>Fitting</span></button></div><div class="c"><slot></slot></div>`;
  });

def('status-bar', `
  :host{display:flex;height:15px;overflow:hidden;background:#f0f0f0;border-top:1px solid #d7d7d7;font-size:13px;line-height:16px;padding:1px 3px 0 4px;white-space:pre}
  span{padding:0 1px 0 11px;border-right:1px solid #d0d0d0} .m{flex:1;border:0;padding:0} .e{padding:0 0 0 7px} .n{padding:0 1px 0 4px;font-size:11px} .l{border:0;padding:0 0 0 4px}`,
  `<span class="m"><slot></slot></span><span>平均值=0 求和=0 计数=0</span><span>AU : 开</span><span class="e"></span><span class="n">1: [Book1]Sheet1!</span><span class="l">弧度</span>`);

/* ---------- whole window ---------- */
const items = s => s.trim().split(/\s+/).map(n => n === '|' ? '<tool-sep></tool-sep>' : n === '-' ? '<tool-sep row></tool-sep>'
  : `<tool-button icon="${n.replace(/[*!+]$/, '')}"${n.endsWith('*') ? ' drop' : n.endsWith('+') ? ' wide' : n.endsWith('!') ? ' pressed' : ''}></tool-button>`).join('');
const bar = (inner, a = '') => `<tool-bar ${a}>${inner}</tool-bar>`;
const combo = (t, a) => `<tool-combo ${a}>${t}</tool-combo>`;

def('origin-app', `
  :host{display:flex;flex-direction:column;height:100vh;background:#e9ebfb}
  .row{display:flex;flex:none;background:linear-gradient(90deg,#e9ebfb,#f2f5fd 60%,#f3f6fe)}
  .r1{height:25px}.r2{height:26px;gap:1px;padding-top:1px}
  main{display:flex;flex:1;min-height:0}
  .tabs{flex:none;width:21px;padding-top:5px}
  .left{flex:none;width:36px;padding-top:1px}
  .mid{flex:1;min-width:0;display:flex;flex-direction:column}
  .bot{height:27px;background:#f0f3fd}
  .right{flex:none;width:40px;padding-top:1px;display:flex;flex-direction:column;background:linear-gradient(90deg,#e9ebfb 35px,#f3f6fe 35px)}
  aside{flex:none;width:152px;display:flex;flex-direction:column;background:#f3f6fe;padding-top:1px}
  .obj{margin-bottom:4px}
  .well{height:121px;background:#fff;border:2px solid #696969;border-color:#696969 #dcdcdc #696969 #696969;box-shadow:inset 1px 1px #a0a0a0,inset -1px -1px #e3e3e3}
  .apps{flex:1;min-height:0}`,
  () => `
  <title-bar>OriginPro 2018C 64-bit (Administrator) - C:\\Users\\Administrator\\Documents\\OriginLab\\User Files\\UNTITLED - /Folder1/ - [Book1]</title-bar>
  <menu-bar>${[['文件', 'F'], ['编辑', 'E'], ['查看', 'V'], ['绘图', 'P'], ['列', 'C'], ['工作表', 'K'], ['分析', 'A'], ['统计', 'S'], ['图像', 'I'], ['工具', 'T'], ['格式', 'O'], ['窗口', 'W'], ['帮助', 'H']].map(([t, k]) => `<menu-item key="${k}">${t}</menu-item>`).join('')}</menu-bar>
  <div class="row r1">
    ${bar(items('new newfolder newbook newgraph newmatrix newfunc* newlayout newnotes newfunc2 | open opent save savet | wand imp1 imp2 excel | batch run |') + combo('100%', 'active label="缩放"') + items('| print slide snap film | editpen twowin tile* | org | project view! results script gear | addcol'))}
    ${bar(items('sumrow sumcol sort | set123 | bars1 bars2 bars3 | filter nofilter refilter'))}
    ${bar(items('X Y Z err abc none | G S | first prev next last'))}
  </div>
  <div class="row r2">
    ${bar(items('cut copy paste'))}
    ${bar(combo('默认: 宋体', 'size="126" icon label="字体"') + combo('0', 'label="字号"') + items('B I U sup sub supsub greek bigA smallA align* vlines* fontcolor+'))}
    ${bar(items('bucket+ palette+ pen+ bulb') + combo('', 'line label="线型"') + combo('0', 'label="线宽"') + combo('', 'swatch size="49" label="颜色"') + combo('0', 'label="大小"') + items('hatch* border* merge'))}
    ${bar(items('maskM maskX | arr1 arr2 | lock'))}
    ${bar(items('db1 db2 db3 db4 db5 db6'))}
  </div>
  <main>
    <div class="tabs"><side-tab size="111">项目管理器 (1)</side-tab><side-tab size="75">快速帮助</side-tab><side-tab size="75">消息日志</side-tab><side-tab size="75">提示日志</side-tab></div>
    <div class="left">
      ${bar(items('pointer! zoomin zoomout cross datasel* updown ellipse* ptpath* dots text datatext arrow* line* rect* hand eq* gobj* handaxis box3d'), 'vertical broad')}
      ${bar(items('lines4 rings legend bracket ruler clock fstamp grid'), 'vertical')}
    </div>
    <div class="mid"><book-window></book-window>
      <div class="row bot">
        ${bar(items('pline* pscatter* plinesym* pbar* pmulti* pbox* parea* ppolar* pstock* pcube'))}
        ${bar(items('p3bar* | p3surf* p3scat* pcont* pcont2* pimg'))}
        ${bar(items('mask1 mask2 | mask3 m1 m2 | m3'))}
        ${bar(items('r1 r2 r3 r4 r5 r6 r7 r8 r9 r10 r11') + combo('10', 'label="角度"'))}
      </div></div>
    <div class="right">
      ${bar(items('stairs ax1 ax2 ax3 xy runner - lay1 lay2 lay3 tile* - a1 a2 a3 a4 a5 a6'), 'vertical broad')}
      ${bar(items('al1 al2 - al3 al4 - al5 al6 - ds1 ds2 - eq1 eq2 front back - sz1 sz2'), 'vertical fill')}
    </div>
    <aside>
      <dock-panel class="obj" label="对象管理器"><div class="well"></div></dock-panel>
      <dock-panel class="apps" small label="Apps"><app-list>
        <app-item icon="add">添加App</app-item><app-item icon="ppt">Send
Graphs t...</app-item><app-item icon="word">Send
Graphs ...</app-item><app-item icon="fit">Simple Fit</app-item>
      </app-list></dock-panel>
    </aside>
  </main>
  <status-bar>按F1键打开帮助文档</status-bar>`);
</script>
</body>
</html>
